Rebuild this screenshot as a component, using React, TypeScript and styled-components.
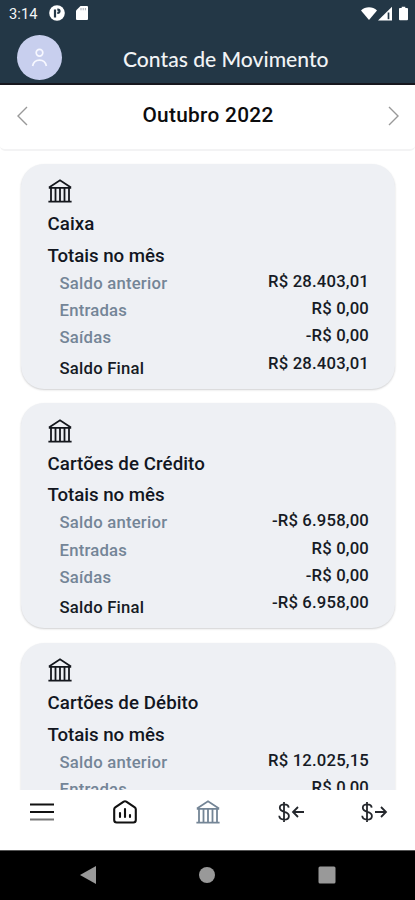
import React from 'react';
import styled, { createGlobalStyle } from 'styled-components';

const GlobalStyle = createGlobalStyle`
  * { box-sizing: border-box; }
  body { margin: 0; background: #fff; overflow: hidden; }
`;

const Screen = styled.div`
  width: 415px;
  height: 900px;
  display: flex;
  flex-direction: column;
  overflow: hidden;
  background: #fff;
  color: #12161f;
  font-family: Roboto, 'Liberation Sans', sans-serif;
  font-weight: 500;
  white-space: nowrap;
  svg { display: block; flex: none; }
`;

const StatusBar = styled.div`
  height: 28px;
  flex: none;
  display: flex;
  align-items: center;
  justify-content: space-between;
  padding: 0 7px 2px 9px;
  background: #233746;
  color: #f4f6f8;
  font-size: 14.6px;
  font-weight: 400;
  letter-spacing: 0.1px;
`;

const StatusGroup = styled.div<{ $gap: number }>`
  display: flex;
  align-items: center;
  gap: ${(p) => p.$gap}px;
`;

const Clock = styled.span`
  width: 29px;
  padding-top: 1px;
`;

const Header = styled.header`
  height: 57px;
  flex: none;
  display: grid;
  grid-template-columns: 46px 1fr;
  align-items: center;
  padding: 4px 18px 0 17px;
  background: #233746;
  border-bottom: 2px solid #17171e;
`;

const Avatar = styled.div`
  width: 45px;
  height: 45px;
  border-radius: 50%;
  display: grid;
  place-items: center;
  background: #c8cfee;
`;

const Title = styled.h1`
  margin: 2px 0 0 60px;
  font-family: Lato, sans-serif;
  font-size: 21.1px;
  font-weight: 500;
  line-height: 28px;
  color: #f1f3f5;
`;

const MonthBar = styled.div`
  height: 66px;
  flex: none;
  display: flex;
  align-items: center;
  justify-content: space-between;
  padding: 0 15px 2px 16px;
  border-bottom: 2px solid #f3f3f4;
  border-radius: 0 0 5px 5px;
`;

const Month = styled.h2`
  margin: 0;
  padding-bottom: 3px;
  font-size: 20.8px;
  letter-spacing: 0.3px;
  font-weight: 500;
  line-height: 26px;
  color: #0c0c0e;
`;

const List = styled.main`
  height: 639px;
  flex: none;
  overflow: hidden;
  display: flex;
  flex-direction: column;
  gap: 14.5px;
  padding: 12.5px 20px 0 21px;
`;

const Card = styled.section`
  height: 225.2px;
  flex: none;
  padding: 15.5px 26px 0 26.5px;
  border-radius: 23px;
  background: #eef0f4;
  box-shadow: 0 1px 2px rgba(40, 40, 45, 0.22);
`;

const CardTitle = styled.h3<{ $top: number; $tracking: number }>`
  margin: ${(p) => p.$top}px 0 0;
  font-size: 18.7px;
  letter-spacing: ${(p) => p.$tracking}px;
  font-weight: 500;
  line-height: 24px;
`;

const Totals = styled.div`
  display: flex;
  justify-content: space-between;
  padding: 2px 0 0 12px;
`;

const Column = styled.div<{ $values?: boolean }>`
  display: flex;
  flex-direction: column;
  text-align: ${(p) => (p.$values ? 'right' : 'left')};
  margin-top: ${(p) => (p.$values ? -2 : 0)}px;
`;

const Entry = styled.span<{ $tone: 'muted' | 'final' | 'value' }>`
  height: 27.4px;
  line-height: 27.4px;
  font-size: 16.7px;
  letter-spacing: ${(p) => (p.$tone === 'value' ? 0.17 : 0.22)}px;
  margin-top: ${(p) => (p.$tone === 'final' ? 3 : 0)}px;
  color: ${(p) => (p.$tone === 'muted' ? '#748597' : '#161b25')};
`;

const TabBar = styled.nav`
  height: 60px;
  flex: none;
  display: grid;
  grid-template-columns: repeat(5, 1fr);
  justify-items: center;
  padding-top: 10px;
  background: #fff;
`;

const SystemBar = styled.div`
  height: 50px;
  flex: none;
  display: grid;
  grid-template-columns: 16px 16px 18px;
  column-gap: 103px;
  justify-content: center;
  align-items: center;
  padding-bottom: 1px;
  background: #000;
  border-top: 1px solid #555;
`;

const BankIcon = ({ color = '#14171d' }: { color?: string }) => (
  <svg width="24" height="24" viewBox="0 0 24 24" fill="none" stroke={color} strokeWidth="1.8">
    <path d="M.4 22.6h23.2M.8 8.8h22.4M1 8.6 12 1.3l11 7.3" />
    <path d="M3 9v13M7.500 9v13M12 9v13M16.500 9v13M21 9v13" />
  </svg>
);

const MoneyIcon = ({ incoming }: { incoming?: boolean }) => (
  <svg width="28" height="24" viewBox="0 0 28 24" fill="none" stroke="#24272c" strokeWidth="1.8">
    <path d="M7 2v20M11.700 7.700c-.2-2.100-1.900-3.300-4.500-3.300-2.700 0-4.400 1.300-4.400 3.300C2.800 10 4.500 11 7.200 11.800c3 .8 4.700 1.800 4.700 4.100 0 2.300-1.900 3.700-4.700 3.700s-4.800-1.400-5-3.800" />
    {incoming ? <path d="M27 12H16m5-5-5 5 5 5" /> : <path d="M15 12h11m-5-5 5 5-5 5" />}
  </svg>
);

const accounts = [
  { name: 'Caixa', values: ['R$ 28.403,01', 'R$ 0,00', '-R$ 0,00', 'R$ 28.403,01'] },
  { name: 'Cartões de Crédito', values: ['-R$ 6.958,00', 'R$ 0,00', '-R$ 0,00', '-R$ 6.958,00'] },
  { name: 'Cartões de Débito', values: ['R$ 12.025,15', 'R$ 0,00'] },
];

const labels = ['Saldo anterior', 'Entradas', 'Saídas', 'Saldo Final'];

const AccountCard = ({ name, values }: { name: string; values: string[] }) => (
  <Card>
    <BankIcon />
    <CardTitle $top={9} $tracking={0.08}>{name}</CardTitle>
    <CardTitle $top={7.5} $tracking={-0.05}>Totais no mês</CardTitle>
    <Totals>
      <Column>
        {labels.slice(0, values.length).map((label, i) => (
          <Entry key={label} $tone={i === 3 ? 'final' : 'muted'}>{label}</Entry>
        ))}
      </Column>
      <Column $values>
        {values.map((value, i) => (
          <Entry key={i} $tone="value">{value}</Entry>
        ))}
      </Column>
    </Totals>
  </Card>
);

export default function App() {
  return (
    <Screen>
      <GlobalStyle />
      <StatusBar>
        <StatusGroup $gap={11}>
          <Clock>3:14</Clock>
          <svg width="16" height="16" viewBox="0 0 16 16">
            <circle cx="8" cy="8" r="7.8" fill="#fff" />
            <path d="M6 12.500V4.500M8.300 4.700h.6a1.600 1.600 0 0 1 0 3.200h-.6" fill="none" stroke="#233746" strokeWidth="2.2" />
          </svg>
          <svg width="12" height="14" viewBox="0 0 12 14">
            <path d="M4.5 0H11a1 1 0 0 1 1 1v12a1 1 0 0 1-1 1H1a1 1 0 0 1-1-1V4.5z" fill="#fff" />
            <path d="M5 2v2.3M7.2 2v2.3M9.4 2v2.3" stroke="#a9b0b7" strokeWidth="1.1" />
          </svg>
        </StatusGroup>
        <StatusGroup $gap={1}>
          <svg width="16" height="15" viewBox="0 0 17 15"><path d="M8.5 14.5 0 4.2C4.6-.3 12.4-.3 17 4.2z" fill="#fff" /></svg>
          <svg width="20" height="15" viewBox="0 0 20 15"><path d="M14 .8V14.5H0z" fill="#fff" /><path d="M10.5 6.5v6.7" stroke="#233746" strokeWidth="1.7" /></svg>
          <svg width="9" height="15" viewBox="0 0 10 15"><path d="M3 0h4v1.5h2a1 1 0 0 1 1 1V14a1 1 0 0 1-1 1H1a1 1 0 0 1-1-1V2.500a1 1 0 0 1 1-1h2z" fill="#fff" /></svg>
        </StatusGroup>
      </StatusBar>
      <Header>
        <Avatar>
          <svg width="17" height="19" viewBox="0 0 18 20" fill="none" stroke="#f7f8ff" strokeWidth="1.8">
            <circle cx="9" cy="5" r="3.5" />
            <path d="M1.7 19c.7-3.800 3.500-6.300 7.300-6.300s6.600 2.500 7.300 6.300" />
          </svg>
        </Avatar>
        <Title>Contas de Movimento</Title>
      </Header>
      <MonthBar>
        <svg width="12" height="20" viewBox="0 0 12 20" fill="none" stroke="#999" strokeWidth="1.4"><path d="M11 1 2 10l9 9" /></svg>
        <Month>Outubro 2022</Month>
        <svg width="12" height="20" viewBox="0 0 12 20" fill="none" stroke="#999" strokeWidth="1.4"><path d="m1 1 9 9-9 9" /></svg>
      </MonthBar>
      <List>
        {accounts.map((account) => <AccountCard key={account.name} {...account} />)}
      </List>
      <TabBar>
        <svg width="24" height="24" viewBox="0 0 24 24" fill="none" strokeWidth="2">
          <path d="M0 4.500h24M0 12h24" stroke="#111" />
          <path d="M0 19.500h24" stroke="#777" />
        </svg>
        <svg width="24" height="24" viewBox="0 0 24 24" fill="none" stroke="#111" strokeWidth="2.1">
          <path d="M1.200 9.200Q1.200 8 2.200 7.300L10.700 1.600Q12 .800 13.300 1.600L21.800 7.300Q22.800 8 22.800 9.200V20Q22.800 22.500 20.300 22.500H3.700Q1.200 22.500 1.200 20z" />
          <path d="M7 13v4M12 9v8M17 15v2" strokeLinecap="round" />
        </svg>
        <BankIcon color="#748596" />
        <MoneyIcon incoming />
        <MoneyIcon />
      </TabBar>
      <SystemBar>
        <svg width="16" height="18" viewBox="0 0 16 18"><path d="M16 0v18L0 9z" fill="#999" /></svg>
        <svg width="16" height="16" viewBox="0 0 16 16"><circle cx="8" cy="8" r="8" fill="#999" /></svg>
        <svg width="18" height="18" viewBox="0 0 18 18"><rect x=".5" y=".5" width="17" height="17" rx="1.500" fill="#999" /></svg>
      </SystemBar>
    </Screen>
  );
}
